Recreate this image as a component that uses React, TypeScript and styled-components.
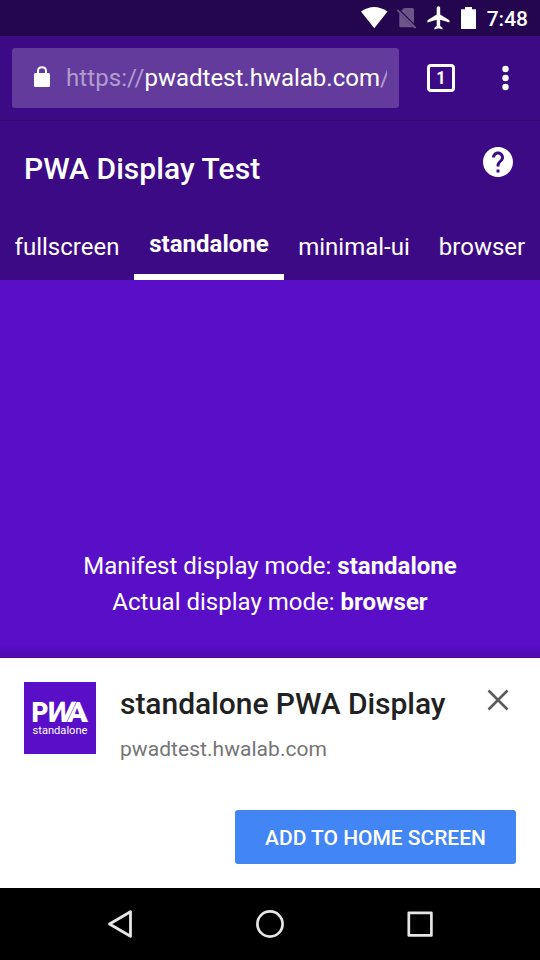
import React from "react";
import styled, { createGlobalStyle } from "styled-components";

const GlobalStyle = createGlobalStyle`
  *, *::before, *::after { box-sizing: border-box; }
  body { margin: 0; background: #000; }
  button { border: 0; padding: 0; background: none; font: inherit; color: inherit; }
`;

const Screen = styled.div`
  width: 540px;
  height: 960px;
  display: flex;
  flex-direction: column;
  overflow: hidden;
  color: #fff;
  font-family: Roboto, "Liberation Sans", sans-serif;
`;

const StatusBar = styled.div`
  flex: none;
  height: 36px;
  display: flex;
  align-items: center;
  justify-content: flex-end;
  padding-right: 12px;
  background: #24064e;
`;

const StatusIcons = styled.svg`
  display: block;
  margin-right: 9px;
`;

const Clock = styled.span`
  font-size: 21px;
  line-height: 36px;
  font-weight: 500;
  padding-top: 1px;
`;

const BrowserBar = styled.div`
  flex: none;
  height: 85px;
  display: flex;
  padding: 12px 23px 0 12px;
  background: #3c0a84;
  border-bottom: 1px solid #31086c;
`;

const AddressField = styled.div`
  width: 387px;
  height: 60px;
  display: flex;
  align-items: center;
  padding: 0 12px 0 21px;
  border-radius: 3px;
  background: #633b9d;
`;

const Url = styled.div`
  flex: 1;
  margin-left: 15px;
  overflow: hidden;
  white-space: nowrap;
  font-size: 24px;
  line-height: 60px;
`;

const Muted = styled.span`
  color: #b19dce;
  letter-spacing: 0.08px;
`;

const TabCount = styled.button`
  width: 28px;
  height: 28px;
  margin: 16px 0 0 28px;
  border: 3px solid #fff;
  border-radius: 4px;
  font-size: 18.5px;
  line-height: 22px;
  font-weight: 700;
  text-align: center;
`;

const TabNumber = styled.span`
  display: block;
  transform: scaleX(0.88);
`;

const MenuButton = styled.button`
  width: 24px;
  height: 28px;
  margin: 16px 0 0 auto;
  svg { display: block; }
`;

const AppHeader = styled.header`
  flex: none;
  height: 159px;
  display: flex;
  flex-direction: column;
  justify-content: space-between;
  background: #3c0a84;
`;

const TitleRow = styled.div`
  display: flex;
  justify-content: space-between;
  padding: 23px 24px 0;
`;

const Title = styled.h1`
  margin: 0;
  padding-top: 0.5px;
  font-size: 30px;
  line-height: 48px;
  font-weight: 500;
  letter-spacing: 0.06px;
`;

const HelpButton = styled.button`
  width: 36px;
  height: 36px;
  svg { display: block; }
`;

const Tabs = styled.nav`
  display: flex;
  height: 68px;
`;

const Tab = styled.a<{ $width: number; $active?: boolean }>`
  width: ${(p) => p.$width}px;
  display: flex;
  justify-content: center;
  font-size: 24px;
  line-height: ${(p) => (p.$active ? 64 : 70)}px;
  font-weight: ${(p) => (p.$active ? 700 : 400)};
  border-bottom: ${(p) => (p.$active ? "6px solid #fff" : "0")};
`;

const Content = styled.main`
  flex: 1;
  display: flex;
  flex-direction: column;
  justify-content: flex-end;
  padding-bottom: 38px;
  background: linear-gradient(to bottom, transparent calc(100% - 12px), #4d0bab 100%) #590ec7;
  text-align: center;
  font-size: 24px;
  line-height: 36px;
`;

const ModeLine = styled.p`
  margin: 0;
  b { font-weight: 700; }
`;

const Banner = styled.section`
  flex: none;
  height: 230px;
  display: flex;
  flex-direction: column;
  justify-content: space-between;
  padding: 24px;
  background: #fff;
`;

const BannerInfo = styled.div`
  display: flex;
`;

const AppLogo = styled.div`
  width: 72px;
  height: 72px;
  background: #590ec7;
  svg { display: block; }
`;

const BannerText = styled.div`
  margin-left: 24px;
`;

const AppName = styled.h2`
  margin: 0;
  padding-top: 1px;
  font-size: 30px;
  line-height: 42px;
  font-weight: 500;
  letter-spacing: -0.04px;
  color: #212121;
  white-space: nowrap;
`;

const Origin = styled.p`
  margin: 9px 0 0;
  font-size: 21px;
  line-height: 30px;
  letter-spacing: 0.05px;
  color: #757575;
`;

const CloseButton = styled.button`
  width: 24px;
  height: 24px;
  margin: 6px 6px 0 auto;
  svg { display: block; }
`;

const InstallButton = styled.button`
  align-self: flex-end;
  width: 281px;
  height: 54px;
  border-radius: 3px;
  background: #4285f4;
  color: #fff;
  font-size: 21px;
  line-height: 52px;
  font-weight: 500;
  letter-spacing: -0.03px;
  text-align: center;
  padding-top: 1px;
`;

const NavBar = styled.footer`
  flex: none;
  height: 72px;
  display: flex;
  justify-content: center;
  align-items: center;
  gap: 114px;
  background: #000;
  svg { display: block; }
`;

const NavButton = styled.button`
  width: 36px;
  height: 36px;
`;

const tabs = [
  { label: "fullscreen", width: 134 },
  { label: "standalone", width: 150, active: true },
  { label: "minimal-ui", width: 140 },
  { label: "browser", width: 116 },
];

export default function App() {
  return (
    <>
      <GlobalStyle />
      <Screen>
        <StatusBar>
          <StatusIcons width="118" height="36" viewBox="360 0 118 36">
            <path d="M361 11.5Q374 2.5 387.500 11.500L374.300 28.300Z" fill="#fff" />
            <path d="M404 8H412.500Q414 8 414 9.500V24.500L400.700 11.300ZM399.300 13.500L413 27.200H400.500Q399.300 27.200 399.300 26Z" fill="#6b5589" />
            <path d="M400.700 11.300L414 24.500V27.200H413L399.300 13.500Z" fill="#6b5589" />
            <path d="M399 9.500L416 26.500" stroke="#24064e" strokeWidth="1.200" />
            <path d="M397.300 9.800L415.600 28" stroke="#6b5589" strokeWidth="1.800" />
            <path transform="translate(425.100 4) scale(1.160)" d="M21 16v-2l-8-5V3.500C13 2.670 12.330 2 11.500 2S10 2.670 10 3.500V9l-8 5v2l8-2.500V19l-2 1.500V22l3.500-1 3.500 1v-1.500L13 19v-5.500l8 2.500z" fill="#fff" />
            <path d="M461 9.300H465V7H472V9.300H476V29H461Z" fill="#fff" />
          </StatusIcons>
          <Clock>7:48</Clock>
        </StatusBar>
        <BrowserBar>
          <AddressField>
            <svg width="18" height="24" viewBox="33 66 18 24">
              <path d="M38 74V71Q38 67.200 42 67.200Q46 67.200 46 71V74" fill="none" stroke="#fff" strokeWidth="2" />
              <rect x="34" y="73" width="16" height="14" rx="1.500" fill="#fff" />
            </svg>
            <Url><Muted>https://</Muted>pwadtest.hwalab.com<Muted>/</Muted></Url>
          </AddressField>
          <TabCount><TabNumber>1</TabNumber></TabCount>
          <MenuButton>
            <svg width="24" height="28" fill="#fff">
              <circle cx="12.500" cy="5" r="3.200" /><circle cx="12.500" cy="14" r="3.200" /><circle cx="12.500" cy="23" r="3.200" />
            </svg>
          </MenuButton>
        </BrowserBar>
        <AppHeader>
          <TitleRow>
            <Title>PWA Display Test</Title>
            <HelpButton>
              <svg width="36" height="36" viewBox="0 0 24 24" fill="#fff">
                <path d="M12 2C6.480 2 2 6.480 2 12s4.480 10 10 10 10-4.480 10-10S17.520 2 12 2zm1 17h-2v-2h2v2zm2.070-7.750l-.9.920C13.450 12.900 13 13.500 13 15h-2v-.5c0-1.100.45-2.100 1.170-2.830l1.240-1.260c.37-.36.590-.86.590-1.410 0-1.100-.9-2-2-2s-2 .9-2 2H8c0-2.210 1.790-4 4-4s4 1.790 4 4c0 .88-.36 1.680-.93 2.250z" />
              </svg>
            </HelpButton>
          </TitleRow>
          <Tabs>
            {tabs.map((t) => (
              <Tab key={t.label} $width={t.width} $active={t.active}>{t.label}</Tab>
            ))}
          </Tabs>
        </AppHeader>
        <Content>
          <ModeLine>Manifest display mode: <b>standalone</b></ModeLine>
          <ModeLine>Actual display mode: <b>browser</b></ModeLine>
        </Content>
        <Banner>
          <BannerInfo>
            <AppLogo>
              <svg width="72" height="72" fontFamily="Roboto, sans-serif" fill="#fff">
                <g fontSize="28.500" stroke="#590ec7" strokeWidth="1.600" paintOrder="stroke">
                  <text x="42" y="40.300" fontWeight="900" textLength="22" lengthAdjust="spacingAndGlyphs">A</text>
                  <text transform="translate(20 40.300) skewX(-13)" fontWeight="700" strokeWidth="1" textLength="28" lengthAdjust="spacingAndGlyphs">W</text>
                  <text x="7.500" y="40.300" fontWeight="900" textLength="17" lengthAdjust="spacingAndGlyphs">P</text>
                </g>
                <text x="8.500" y="51.600" fontSize="11.500" textLength="55" lengthAdjust="spacingAndGlyphs">standalone</text>
              </svg>
            </AppLogo>
            <BannerText>
              <AppName>standalone PWA Display</AppName>
              <Origin>pwadtest.hwalab.com</Origin>
            </BannerText>
            <CloseButton>
              <svg width="24" height="24"><path d="M2.500 2.500L21.500 21.500M21.500 2.500L2.500 21.500" stroke="#5a5a5a" strokeWidth="2.500" /></svg>
            </CloseButton>
          </BannerInfo>
          <InstallButton>ADD TO HOME SCREEN</InstallButton>
        </Banner>
        <NavBar>
          <NavButton><svg width="36" height="36" fill="none" stroke="#e6e6e6" strokeWidth="2.800" strokeLinejoin="round"><path d="M7.500 18L28.500 5.700V30.300Z" /></svg></NavButton>
          <NavButton><svg width="36" height="36" fill="none" stroke="#e6e6e6" strokeWidth="2.700"><circle cx="18" cy="18" r="12.600" /></svg></NavButton>
          <NavButton><svg width="36" height="36" fill="none" stroke="#e6e6e6" strokeWidth="2.700" strokeLinejoin="round"><rect x="6.800" y="6.800" width="22.600" height="22.600" /></svg></NavButton>
        </NavBar>
      </Screen>
    </>
  );
}
